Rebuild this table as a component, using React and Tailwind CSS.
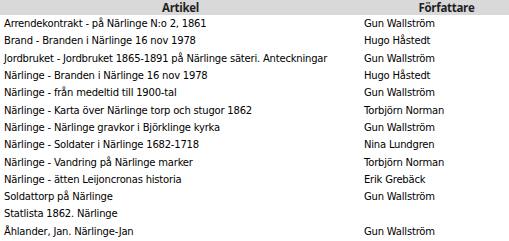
const ROWS = [
  ['Arrendekontrakt - på Närlinge N:o 2, 1861', 'Gun Wallström'],
  ['Brand - Branden i Närlinge 16 nov 1978', 'Hugo Håstedt'],
  ['Jordbruket - Jordbruket 1865-1891 på Närlinge säteri. Anteckningar', 'Gun Wallström'],
  ['Närlinge - Branden i Närlinge 16 nov 1978', 'Hugo Håstedt'],
  ['Närlinge - från medeltid till 1900-tal', 'Gun Wallström'],
  ['Närlinge - Karta över Närlinge torp och stugor 1862', 'Torbjörn Norman'],
  ['Närlinge - Närlinge gravkor i Björklinge kyrka', 'Gun Wallström'],
  ['Närlinge - Soldater i Närlinge 1682-1718', 'Nina Lundgren'],
  ['Närlinge - Vandring på Närlinge marker', 'Torbjörn Norman'],
  ['Närlinge - ätten Leijoncronas historia', 'Erik Grebäck'],
  ['Soldattorp på Närlinge', 'Gun Wallström'],
  ['Statlista 1862. Närlinge', ''],
  ['Åhlander, Jan. Närlinge-Jan', 'Gun Wallström'],
];

export default function App() {
  return (
    <div className="w-[509px] h-[241px] overflow-hidden bg-white">
      <table className="border-collapse w-[532px] table-fixed">
        <thead>
          <tr className="bg-[#d9d9d9] h-[15px]">
            <th className="w-[361px] p-0 text-center text-[11.5px] leading-[15px] font-bold tracking-[-0.3px] text-[#1f1f1f] font-['Open_Sans',sans-serif]">
              Artikel
            </th>
            <th className="p-0 text-center text-[11.5px] leading-[15px] font-bold tracking-[-0.3px] text-[#1f1f1f] font-['Open_Sans',sans-serif]">
              Författare
            </th>
          </tr>
        </thead>
        <tbody className="font-['DejaVu_Sans',sans-serif] text-[10px] text-black">
          {ROWS.map(([title, author]) => (
            <tr key={title} className="h-[17.3px]">
              <td className="p-0 pl-[4px] whitespace-nowrap leading-[17px] tracking-[-0.2px]">{title}</td>
              <td className="p-0 pl-[3px] whitespace-nowrap leading-[17px] tracking-[-0.2px]">{author}</td>
            </tr>
          ))}
        </tbody>
      </table>
    </div>
  );
}
